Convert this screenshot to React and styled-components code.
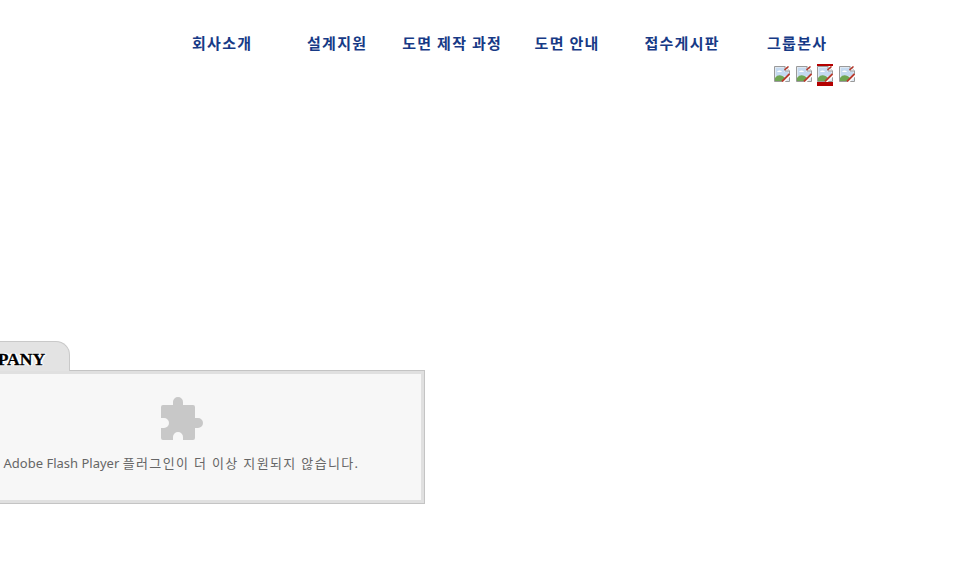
import React from 'react'
import styled, { createGlobalStyle } from 'styled-components'

const GlobalStyle = createGlobalStyle`
  html, body { margin: 0; padding: 0; background: #fff; overflow: hidden; }
  body { font-family: "Noto Sans CJK KR", "Noto Sans", sans-serif; }
`

const Page = styled.div`
  width: 960px;
  height: 563px;
  overflow: hidden;
`

const Header = styled.header`
  height: 341px;
  padding-top: 31px;
  box-sizing: border-box;
`

const Nav = styled.nav`
  display: flex;
  margin-left: 164px;
`

const NavItem = styled.a`
  width: 115px;
  text-align: center;
  text-indent: 1.3px;
  font-size: 15px;
  letter-spacing: 1.3px;
  line-height: 24px;
  font-weight: 700;
  color: #173a86;
  white-space: nowrap;
`

const IconRow = styled.div`
  display: flex;
  gap: 5.5px;
  margin: 11px 0 0 774px;
`

const BrokenImage = styled.svg`
  display: block;
  width: 16px;
  height: 16px;
`

const Tab = styled.div`
  position: relative;
  z-index: 1;
  width: 132px;
  height: 30px;
  margin: 0 0 -1px -62px;
  box-sizing: border-box;
  background: #e3e3e3;
  border: 1px solid #c9c9c9;
  border-bottom: none;
  border-radius: 0 14px 0 0;
  text-align: center;
  font-family: "Liberation Serif", serif;
  font-weight: 700;
  font-size: 17.5px;
  line-height: 35px;
  padding-right: 8px;
  color: #000;
  -webkit-text-stroke: 0.3px #000;
  text-shadow: 0 0 2px #fff, 1px 1px 1px #fff, -1px -1px 1px #fff, 1px -1px 1px #fff, -1px 1px 1px #fff, 2px 0 1px #fff, -2px 0 1px #fff;
`

const FlashBox = styled.div`
  width: 487px;
  height: 134px;
  margin-left: -62px;
  box-sizing: border-box;
  background: #f7f7f7;
  border: 1px solid #c4c4c4;
  outline: 3px solid #e0e0e0;
  outline-offset: -4px;
  display: flex;
  flex-direction: column;
  align-items: center;
  padding-top: 26px;
`

const Puzzle = styled.svg`
  display: block;
  width: 44px;
  height: 44px;
  margin-left: 1px;
`

const FlashMessage = styled.p`
  margin: 12px 0 0;
  font-family: "Noto Sans", "Noto Sans CJK KR", sans-serif;
  font-size: 13px;
  line-height: 20px;
  color: #666;
  white-space: nowrap;
`

const KoreanText = styled.span`
  letter-spacing: 1.35px;
`

const ActiveMark = styled.span`
  display: block;
  position: relative;
  width: 16px;
  height: 20px;
  border-top: 2px solid #b40000;
  margin-top: -2px;
  &::after {
    content: '';
    position: absolute;
    left: 0;
    right: 0;
    bottom: 0;
    height: 4px;
    background: #b40000;
  }
`

const menu = ['회사소개', '설계지원', '도면 제작 과정', '도면 안내', '접수게시판', '그룹본사']

function BrokenIcon() {
  return (
    <BrokenImage viewBox="0 0 16 16">
      <path d="M0.5 0.5H11L15.500 5V15.500H0.500Z" fill="#dfe8f2" stroke="#9a9a9a" />
      <path d="M2 2H10V6H14V10H2Z" fill="#c5daf0" />
      <path d="M3 6C4 4 7 4 8 6Z" fill="#fff" />
      <path d="M1 15V12C4 8 8 9 11 12L9 15Z" fill="#6fa653" />
      <path d="M11 0.500V5H15.500" fill="#f4f4f4" stroke="#9a9a9a" />
      <path d="M10.500 4L14.500 0.500" stroke="#b3362a" strokeWidth="1.500" />
      <path d="M9 16L16 9" stroke="#fff" strokeWidth="2.500" />
      <path d="M8 15.500L15.500 8" stroke="#b93a2c" strokeWidth="1.800" />
    </BrokenImage>
  )
}

export default function App() {
  return (
    <Page>
      <GlobalStyle />
      <Header>
        <Nav>
          {menu.map((label) => (
            <NavItem key={label}>{label}</NavItem>
          ))}
        </Nav>
        <IconRow>
          <BrokenIcon />
          <BrokenIcon />
          <ActiveMark>
            <BrokenIcon />
          </ActiveMark>
          <BrokenIcon />
        </IconRow>
      </Header>
      <Tab>COMPANY</Tab>
      <FlashBox>
        <Puzzle viewBox="0 0 44 44">
          <path
            fill="#c8c8c8"
            d="M3 8H13V5A5 5 0 0 1 23 5V8H33A2 2 0 0 1 35 10V21H38A5 5 0 0 1 38 31H35V41A2 2 0 0 1 33 43H23V40A5 5 0 0 0 13 40V43H3A2 2 0 0 1 1 41V31H4A5 5 0 0 0 4 21H1V10A2 2 0 0 1 3 8Z"
          />
        </Puzzle>
        <FlashMessage>
          Adobe Flash Player <KoreanText>플러그인이 더 이상 지원되지 않습니다.</KoreanText>
        </FlashMessage>
      </FlashBox>
    </Page>
  )
}
